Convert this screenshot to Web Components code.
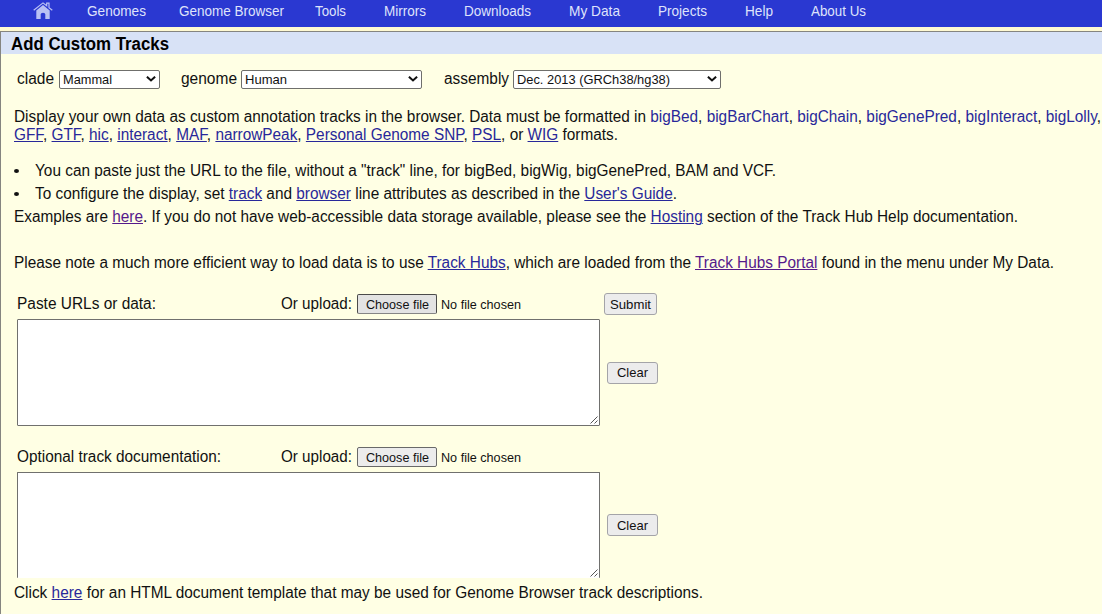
<!DOCTYPE html>
<html lang="en">
<head>
<meta charset="utf-8">
<title>Add Custom Tracks</title>
<style>
html,body{margin:0;height:100%;overflow:hidden;background:#fff9d2}
body{font-family:"Liberation Sans",Arial,sans-serif;font-size:16px;line-height:18px;color:#111}
</style>
</head>
<body>
<custom-tracks-page></custom-tracks-page>
<script>
const define = (name, html, setup) => customElements.define(name, class extends HTMLElement {
  connectedCallback() {
    if (this.shadowRoot) return;
    const t = document.createElement('template');
    t.innerHTML = html;
    this.attachShadow({mode: 'open'}).append(t.content.cloneNode(true));
    if (setup) setup(this, this.shadowRoot);
  }
});

// One line of text, condensed or widened to fill the width in "w".
define('text-line', `<style>
:host{display:block;flex:none;white-space:pre}
span{display:inline-block;white-space:pre;transform-origin:0 0}
::slotted(a){color:#28289a;text-decoration:underline;text-underline-offset:1px;text-decoration-thickness:1px}
::slotted(a.plain){text-decoration:none}
::slotted(a.visited){color:#551a8b}
</style><span><slot></slot></span>`, (host, root) => {
  const w = +host.getAttribute('w'), span = root.querySelector('span');
  host.style.width = w + 'px';
  const natural = span.getBoundingClientRect().width;
  span.style.transform = 'scaleX(' + w / natural + ')';
});

define('home-icon', `<style>:host{display:block;width:20px;height:18px;margin-top:-1px}svg{display:block}</style>
<svg width="20" height="18" viewBox="0 0 20 18" fill="#b9c1f4"><path d="M3.3 8.5 10 3.1l6.7 5.4v8.4h-4.4v-4.6q0-1.5-2.3-1.5t-2.3 1.5v4.6H3.3z"/><path d="M.7 8.2 10 .9l3.7 2.9V1.1H16v4.5l3.3 2.6" fill="none" stroke="#b9c1f4" stroke-width="1.2"/></svg>`);

define('nav-bar', `<style>
:host{display:flex;height:27px;background:#2a38d1;color:#dfe3fb;font-size:14.2px;line-height:16px;padding:3px 0 0 33px;box-sizing:border-box;align-items:flex-start}
::slotted(text-line){margin-left:var(--gap);margin-top:0}
</style><home-icon></home-icon><slot></slot>`);

define('select-box', `<style>
:host{display:flex;flex:none;box-sizing:border-box;height:19px;border:1px solid #6f6f6c;border-radius:2px;background:#fff;color:#111;font-size:13.33px;line-height:17px;padding:0 3px 0 3px;justify-content:space-between;align-items:center;margin-left:4px}
svg{margin-bottom:1px}
</style><slot></slot><svg width="10" height="6" viewBox="0 0 10 6"><path d="M.9.7 5 4.5 9.1.7" fill="none" stroke="#111" stroke-width="2"/></svg>`,
h => h.style.width = h.getAttribute('w') + 'px');

define('push-button', `<style>
:host{display:flex;flex:none;box-sizing:border-box;align-items:center;justify-content:center;border:1px solid #a4a4a8;border-radius:3px;background:#ececec;color:#111;font-size:13.33px;line-height:16px;height:22px}
:host([file]){height:20px;border-color:#696969;border-radius:2px;padding-top:2px}
:host([slot]){padding-top:2px}
:host([focused]){background:#e3e3e3;border-color:#4b4b4b;border-bottom-color:#858585}
</style><slot></slot>`, h => h.style.width = h.getAttribute('w') + 'px');

define('data-entry', `<style>
:host{display:block;padding-left:16px}
.head{display:flex;height:25px}
.caption{width:264px}
.caption,.or{padding-top:1px}
push-button[file]{margin:0 4px 0 5px}
.status{font-size:13.33px;line-height:20px;padding-top:1px}
:host([cut]) .head{font-size:15.6px}
:host([cut]) .status,:host([cut]) push-button[file]{font-size:12.7px}
.body{display:flex}
.area{width:583px;height:107px;box-sizing:border-box;border:1px solid #70706e;border-radius:1px;background:#fff;display:flex;justify-content:flex-end;align-items:flex-end}
:host([cut]) .area{height:106px;border-bottom:0}
svg{margin:0 1px 1px 0}
.clear{margin:43px 0 0 7px}
:host([cut]) .clear{margin-top:42px;padding-top:1px}
</style>
<div class="head"><div class="caption"><slot name="caption"></slot></div><text-line class="or" w="71">Or upload:</text-line>
<push-button file w="80"><text-line w="63">Choose file</text-line></push-button><text-line class="status" w="80">No file chosen</text-line><slot name="action"></slot></div>
<div class="body"><div class="area"><svg width="8" height="8"><path d="M.5 7.5l7-7M4.5 7.5l3-3" stroke="#555" fill="none"/></svg></div><push-button class="clear" w="51"><text-line w="31">Clear</text-line></push-button></div>`,
(h, r) => { if (h.hasAttribute('focused')) r.querySelector('push-button[file]').setAttribute('focused', ''); });

define('track-panel', `<style>
:host{display:block;box-sizing:border-box;margin-top:4px;height:583px;border:solid #858580;border-width:1px 0 0 1px;background:#ffffe4}
header{height:22px;background:#d8e2f6;padding:2px 0 0 10px;box-sizing:border-box;font-size:18px;font-weight:bold;line-height:20px;color:#000}
</style><header><slot name="title"></slot></header><slot></slot>`);

define('custom-tracks-page', `<style>
:host{display:block;overflow:hidden;height:614px}
.filters{display:flex;padding:16px 0 0 16px;height:38px;box-sizing:border-box}
.filters .next{margin-left:21px}
.filters .last{margin-left:22px}
.copy{padding-left:13px}
.last-line{padding-top:1px}
.bullet{display:flex;height:23px;font-size:15.6px}
.bullet::before{content:"";width:5px;height:4px;border-radius:50%;background:#111;margin:7px 16px 0 0}
.examples{height:46px;font-size:15.6px}
.note{height:40px;font-size:15.6px}
data-entry{height:153px}
data-entry[cut]{height:136px}
push-button[slot]{margin:-1px 0 0 83px}
</style>
<nav-bar>
<text-line w="59" style="--gap:34px">Genomes</text-line><text-line w="105" style="--gap:33px">Genome Browser</text-line><text-line w="31" style="--gap:31px">Tools</text-line><text-line w="42" style="--gap:38px">Mirrors</text-line><text-line w="67" style="--gap:38px">Downloads</text-line><text-line w="51" style="--gap:38px">My Data</text-line><text-line w="49" style="--gap:38px">Projects</text-line><text-line w="28" style="--gap:38px">Help</text-line><text-line w="55" style="--gap:38px">About Us</text-line>
</nav-bar>
<track-panel><text-line slot="title" w="158">Add Custom Tracks</text-line>
<div class="filters"><text-line w="37">clade</text-line><select-box w="101" style="margin-left:5px"><text-line w="49">Mammal</text-line></select-box><text-line class="next" w="56">genome</text-line><select-box w="181"><text-line w="42">Human</text-line></select-box><text-line class="last" w="65">assembly</text-line><select-box w="208"><text-line w="153">Dec. 2013 (GRCh38/hg38)</text-line></select-box></div>
<div class="copy" style="padding-top:16px">
<text-line w="1087">Display your own data as custom annotation tracks in the browser. Data must be formatted in <a class="plain">bigBed</a>, <a class="plain">bigBarChart</a>, <a class="plain">bigChain</a>, <a class="plain">bigGenePred</a>, <a class="plain">bigInteract</a>, <a class="plain">bigLolly</a>,</text-line>
<text-line w="604" style="height:36px"><a>GFF</a>, <a>GTF</a>, <a>hic</a>, <a>interact</a>, <a>MAF</a>, <a>narrowPeak</a>, <a>Personal Genome SNP</a>, <a>PSL</a>, or <a>WIG</a> formats.</text-line>
<div class="bullet"><text-line w="741">You can paste just the URL to the file, without a "track" line, for bigBed, bigWig, bigGenePred, BAM and VCF.</text-line></div>
<div class="bullet"><text-line w="642">To configure the display, set <a>track</a> and <a>browser</a> line attributes as described in the <a>User's Guide</a>.</text-line></div>
<text-line class="examples" w="1004">Examples are <a class="visited">here</a>. If you do not have web-accessible data storage available, please see the <a>Hosting</a> section of the Track Hub Help documentation.</text-line>
<text-line class="note" w="1040">Please note a much more efficient way to load data is to use <a>Track Hubs</a>, which are loaded from the <a class="visited">Track Hubs Portal</a> found in the menu under My Data.</text-line>
</div>
<data-entry focused><text-line slot="caption" w="139">Paste URLs or data:</text-line><push-button slot="action" w="53"><text-line w="41">Submit</text-line></push-button></data-entry>
<data-entry cut><text-line slot="caption" w="204">Optional track documentation:</text-line></data-entry>
<div class="copy last-line"><text-line w="689">Click <a>here</a> for an HTML document template that may be used for Genome Browser track descriptions.</text-line></div>
</track-panel>`);
</script>
</body>
</html>
